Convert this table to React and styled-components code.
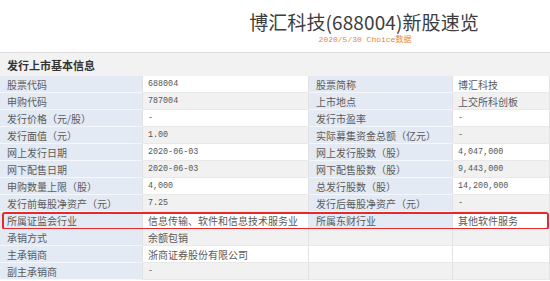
import styled, { createGlobalStyle } from 'styled-components';

const GlobalStyle = createGlobalStyle`
  html, body {
    margin: 0;
    padding: 0;
    background: #fff;
  }
  body {
    width: 550px;
    height: 281px;
    overflow: hidden;
    font-family: "Noto Sans CJK SC", "Noto Sans", sans-serif;
  }
`;

const Page = styled.div`
  width: 550px;
  display: flex;
  flex-direction: column;
`;

const Heading = styled.header`
  height: 52px;
  display: flex;
  flex-direction: column;
  align-items: center;
  padding-left: 178px;
  box-sizing: border-box;
`;

const Title = styled.h1`
  margin: 9px 0 0;
  font-size: 19px;
  line-height: 25px;
  font-weight: 400;
  color: #3d3d3d;
  letter-spacing: 0.1px;
`;

const Sub = styled.div`
  margin-top: 1px;
  font-family: "Liberation Mono", "Noto Sans CJK SC", monospace;
  font-size: 8px;
  line-height: 10px;
  color: #e2873f;
  padding-left: 2px;
`;

const SectionBar = styled.div`
  height: 24px;
  box-sizing: border-box;
  border-top: 1px solid #dcdcdc;
  background: #f2f2f2;
  display: flex;
  align-items: center;
  padding-left: 7px;
  font-size: 11px;
  font-weight: 700;
  color: #333;
`;

const Table = styled.div`
  display: flex;
  flex-direction: column;
`;

const Row = styled.div`
  position: relative;
  height: 17px;
  display: grid;
  grid-template-columns: 143px 166px 144px 1fr;
`;

const Cell = styled.div`
  box-sizing: border-box;
  display: flex;
  align-items: center;
  font-size: 10px;
  line-height: 17px;
  white-space: nowrap;
  overflow: hidden;
  color: #5a5a5a;
  border-bottom: 1px solid ${(p) => (p.$label ? '#f4f7fb' : '#e9e9e9')};
  border-right: 1px solid #e2e2e2;
  padding-left: ${(p) => (p.$label ? '7px' : '5px')};
  background: ${(p) => (p.$label ? '#e4eaf4' : p.$odd ? '#f1f1f1' : '#ffffff')};
`;

const Num = styled.span`
  font-family: "Liberation Mono", monospace;
  font-size: 8.4px;
  color: #555;
`;

const Highlight = styled.div`
  position: absolute;
  left: 2px;
  right: 1px;
  top: 0;
  bottom: -1px;
  border: 2px solid #e42a2a;
  border-radius: 3px;
  pointer-events: none;
`;

const rows = [
  ['股票代码', '688004', '股票简称', '博汇科技'],
  ['申购代码', '787004', '上市地点', '上交所科创板'],
  ['发行价格（元/股）', '-', '发行市盈率', '-'],
  ['发行面值（元）', '1.00', '实际募集资金总额（亿元）', '-'],
  ['网上发行日期', '2020-06-03', '网上发行股数（股）', '4,047,000'],
  ['网下配售日期', '2020-06-03', '网下配售股数（股）', '9,443,000'],
  ['申购数量上限（股）', '4,000', '总发行股数（股）', '14,200,000'],
  ['发行前每股净资产（元）', '7.25', '发行后每股净资产（元）', '-'],
  ['所属证监会行业', '信息传输、软件和信息技术服务业', '所属东财行业', '其他软件服务', true],
  ['承销方式', '余额包销'],
  ['主承销商', '浙商证券股份有限公司'],
  ['副主承销商', '-'],
];

const isNum = (v) => /^[-0-9.,]+$/.test(v);

function Value({ v, odd }) {
  return <Cell $odd={odd}>{v && isNum(v) ? <Num>{v}</Num> : v}</Cell>;
}

export default function App() {
  return (
    <Page>
      <GlobalStyle />
      <Heading>
        <Title>博汇科技(688004)新股速览</Title>
        <Sub>2020/5/30 Choice数据</Sub>
      </Heading>
      <SectionBar>发行上市基本信息</SectionBar>
      <Table>
        {rows.map(([l1, v1, l2, v2, hl], i) => {
          const odd = i % 2 === 1;
          return (
            <Row key={l1}>
              <Cell $label>{l1}</Cell>
              <Value v={v1} odd={odd} />
              {l2 ? <Cell $label>{l2}</Cell> : <Cell $odd={odd} />}
              <Value v={v2} odd={odd} />
              {hl && <Highlight />}
            </Row>
          );
        })}
      </Table>
    </Page>
  );
}
